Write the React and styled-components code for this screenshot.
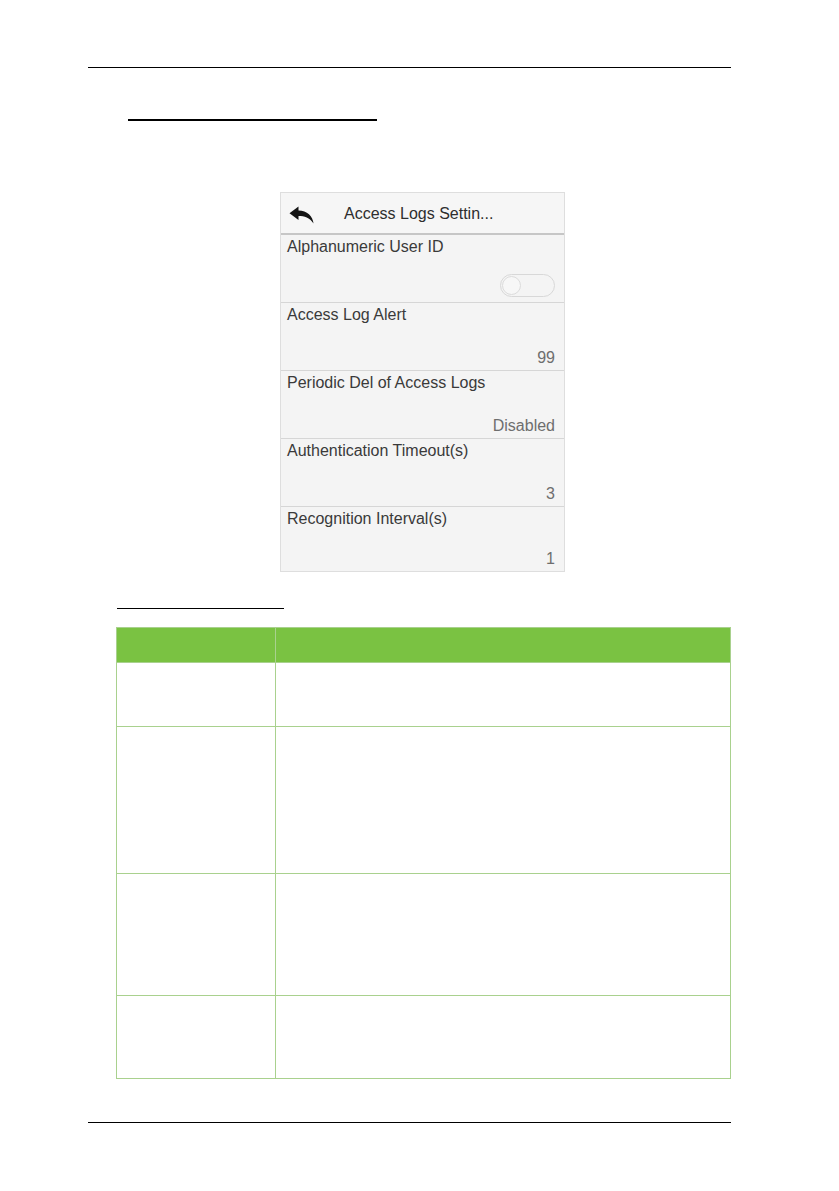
import React from "react";
import styled, { createGlobalStyle } from "styled-components";

const Global = createGlobalStyle`
  html, body { margin: 0; padding: 0; background: #ffffff; }
  body { font-family: "Liberation Sans", Arial, sans-serif; }
`;

const Page = styled.div`
  width: 839px;
  min-height: 1191px;
  padding-top: 67px;
  box-sizing: border-box;
  display: flex;
  flex-direction: column;
`;

const Rule = styled.div`
  height: ${(p) => p.$h || 1}px;
  background: #000;
  margin-top: ${(p) => p.$top || 0}px;
  margin-left: ${(p) => p.$left}px;
  width: ${(p) => p.$w}px;
`;

const Device = styled.div`
  margin-top: 71px;
  margin-left: 280px;
  width: 285px;
  height: 380px;
  box-sizing: border-box;
  border: 1px solid #dedede;
  background: #f4f4f4;
  display: flex;
  flex-direction: column;
  color: #3c3c3c;
  font-size: 16px;
  line-height: 18px;
`;

const TopBar = styled.div`
  height: 42px;
  flex: none;
  box-sizing: border-box;
  border-bottom: 2px solid #c6c6c6;
  display: flex;
  align-items: center;
  padding-left: 8px;
  gap: 30px;
  background: #f6f6f6;
`;

const BackIcon = styled.svg`
  width: 25px;
  height: 18px;
  flex: none;
  margin-top: 4px;
`;

const Title = styled.div`
  font-size: 16px;
  color: #2e2e2e;
  white-space: nowrap;
  padding-top: 1px;
`;

const Item = styled.div`
  height: ${(p) => (p.$last ? "auto" : "68px")};
  flex: ${(p) => (p.$last ? "1" : "none")};
  box-sizing: border-box;
  border-bottom: ${(p) => (p.$last ? "none" : "1px solid #d6d6d6")};
  display: flex;
  flex-direction: column;
  justify-content: space-between;
  padding: 3px 9px 3px 6px;
`;

const ItemLabel = styled.div`
  color: #3a3a3a;
  white-space: nowrap;
`;

const ItemValue = styled.div`
  align-self: flex-end;
  color: #6e6e6e;
`;

const Toggle = styled.div`
  align-self: flex-end;
  width: 55px;
  height: 23px;
  box-sizing: border-box;
  border: 1.5px solid #d8d8d8;
  border-radius: 12px;
  margin-bottom: 2px;
  display: flex;
  align-items: center;
  padding-left: 1px;
`;

const Knob = styled.div`
  width: 19px;
  height: 19px;
  box-sizing: border-box;
  border-radius: 50%;
  border: 1.5px solid #dcdcdc;
  background: #f7f7f7;
`;

const Table = styled.table`
  margin-top: 18px;
  margin-left: 116px;
  width: 615px;
  border-collapse: collapse;
  table-layout: fixed;
`;

const HeadCell = styled.th`
  background: #7ac242;
  border: 1.5px solid #a9d18e;
  height: 34px;
  padding: 0;
`;

const Cell = styled.td`
  border: 1.5px solid #a9d18e;
  height: ${(p) => p.$h}px;
  padding: 0;
  background: #fff;
`;

const items = [
  { label: "Alphanumeric User ID", toggle: true },
  { label: "Access Log Alert", value: "99" },
  { label: "Periodic Del of Access Logs", value: "Disabled" },
  { label: "Authentication Timeout(s)", value: "3" },
  { label: "Recognition Interval(s)", value: "1" },
];

const rows = [63, 146, 121, 82];

export default function App() {
  return (
    <>
      <Global />
      <Page>
        <Rule $left={88} $w={643} />
        <Rule $left={128} $w={249} $h={2} $top={51} />
        <Device>
          <TopBar>
            <BackIcon viewBox="0 0 25 18">
              <path
                d="M9.5 0.5 L0.5 7.2 L9.5 14 V10 C15.5 10 20.5 11.5 24.5 17.5 C24 10 18 4.6 9.5 4.4 Z"
                fill="#141414"
              />
            </BackIcon>
            <Title>Access Logs Settin...</Title>
          </TopBar>
          {items.map((it, i) => (
            <Item key={it.label} $last={i === items.length - 1}>
              <ItemLabel>{it.label}</ItemLabel>
              {it.toggle ? (
                <Toggle>
                  <Knob />
                </Toggle>
              ) : (
                <ItemValue>{it.value}</ItemValue>
              )}
            </Item>
          ))}
        </Device>
        <Rule $left={117} $w={167} $top={36} />
        <Table>
          <colgroup>
            <col style={{ width: "159px" }} />
            <col />
          </colgroup>
          <thead>
            <tr>
              <HeadCell />
              <HeadCell />
            </tr>
          </thead>
          <tbody>
            {rows.map((h, i) => (
              <tr key={i}>
                <Cell $h={h} />
                <Cell $h={h} />
              </tr>
            ))}
          </tbody>
        </Table>
        <Rule $left={88} $w={643} $top={43} />
      </Page>
    </>
  );
}
